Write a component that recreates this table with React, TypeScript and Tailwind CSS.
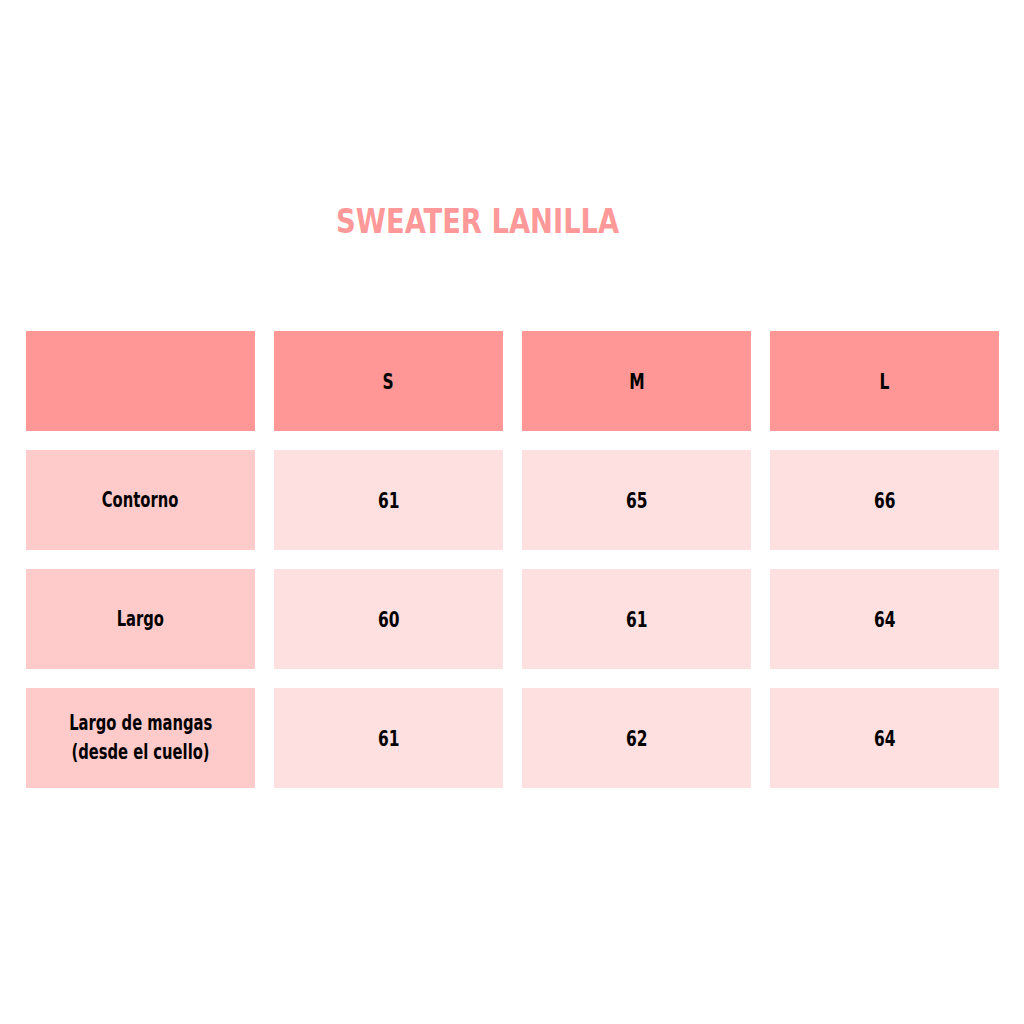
const sizes = ['S', 'M', 'L'];

const rows = [
  { label: ['Contorno'], values: ['61', '65', '66'] },
  { label: ['Largo'], values: ['60', '61', '64'] },
  { label: ['Largo de mangas', '(desde el cuello)'], values: ['61', '62', '64'] },
];

function CellText({ children }: { children: React.ReactNode }) {
  return <span className="inline-block scale-x-[0.78] whitespace-nowrap">{children}</span>;
}

export default function App() {
  return (
    <div
      className="w-[1024px] h-[1024px] bg-white flex flex-col"
      style={{ fontFamily: '"DejaVu Sans Condensed", "Liberation Sans", sans-serif' }}
    >
      <div className="h-[331px] flex items-start pl-[336px] pt-[200px]">
        <h1 className="text-[34px] leading-[42px] font-bold text-[#ff9999] origin-left scale-x-[0.895] whitespace-nowrap">
          SWEATER LANILLA
        </h1>
      </div>

      <div className="pl-[26px] flex flex-col gap-[19px]">
        <div className="flex gap-[19px]">
          <div className="w-[229px] h-[100px] bg-[#ff9797]" />
          {sizes.map((s) => (
            <div
              key={s}
              className="w-[229px] h-[100px] bg-[#ff9797] flex items-center justify-center text-[22px] font-bold text-black"
            >
              <CellText>{s}</CellText>
            </div>
          ))}
        </div>

        {rows.map((row) => (
          <div key={row.label[0]} className="flex gap-[19px]">
            <div className="w-[229px] h-[100px] bg-[#ffcaca] flex flex-col items-center justify-center text-[21px] leading-[29px] font-bold text-black">
              {row.label.map((l) => (
                <CellText key={l}>{l}</CellText>
              ))}
            </div>
            {row.values.map((v, i) => (
              <div
                key={i}
                className="w-[229px] h-[100px] bg-[#ffe0e0] flex items-center justify-center text-[22px] font-bold text-black"
              >
                <CellText>{v}</CellText>
              </div>
            ))}
          </div>
        ))}
      </div>
    </div>
  );
}
